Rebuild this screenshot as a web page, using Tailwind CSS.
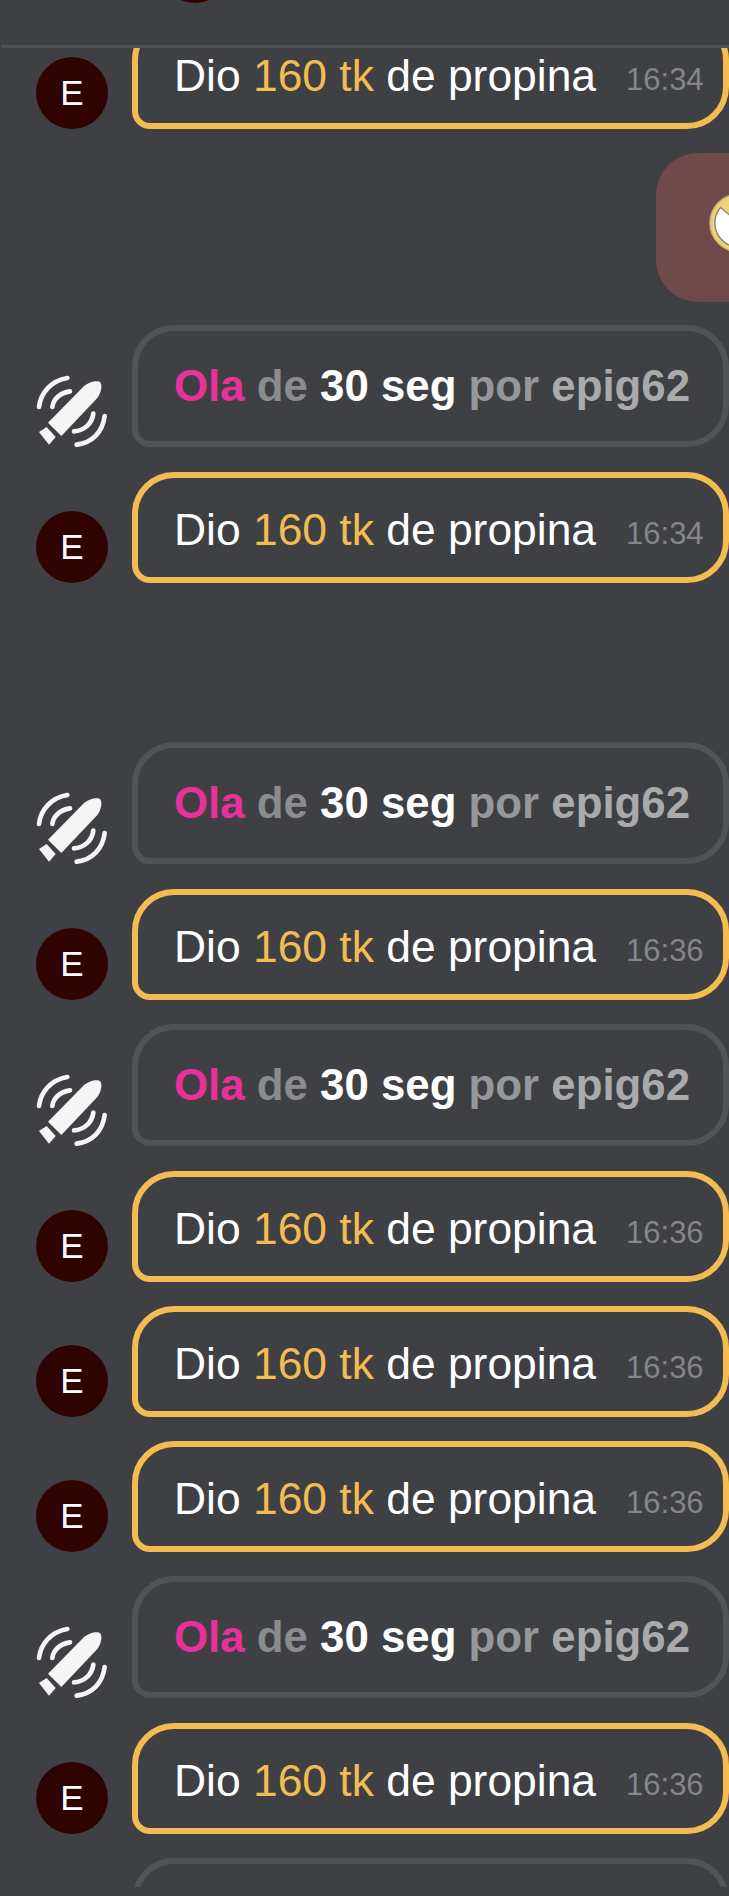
<!DOCTYPE html>
<html lang="es">
  <head>
    <meta charset="utf-8" />
    <meta name="viewport" content="width=device-width, initial-scale=1" />
    <title>Chat</title>
    <script src="https://cdn.jsdelivr.net/npm/@tailwindcss/browser@4"></script>
  </head>
  <body class="bg-[#3e4044] text-white font-['Liberation_Sans',Arial,sans-serif] overflow-hidden">
    <svg class="hidden">
      <symbol id="toy" viewBox="6 9 216 216">
        <g fill="none" stroke="#f5f5f5" stroke-width="14" stroke-linecap="round">
          <path d="M15 105 C20 62 52 26 100 18" />
          <path d="M55 105 C58 82 78 62 108 58" />
          <path d="M120 178 C150 176 174 156 178 125" />
          <path d="M128 218 C175 212 206 180 212 132" />
        </g>
        <path d="M42 152 L148 44 C162 30 190 24 198 30 C206 38 202 62 190 78 L82 192 Z" fill="#f5f5f5" />
        <path d="M15 180 L38 165 L65 195 L45 218 Z" fill="#f5f5f5" />
      </symbol>
    </svg>

    <div class="w-[729px] h-[1896px] overflow-hidden">
      <div class="h-[45px] overflow-hidden">
        <div class="w-[72px] h-[72px] rounded-full bg-[#2f0400] ml-[159px] -mt-[69px]"></div>
      </div>
      <div class="h-[3px] ml-px bg-[#505155]"></div>

      <main class="h-[1839px] overflow-hidden">
        <div class="-mt-[30px] flex flex-col">

          <div class="flex items-end pl-9 h-[111px]">
            <div class="w-[72px] h-[72px] shrink-0 rounded-full bg-[#2f0400] flex items-center justify-center text-[35px]">E</div>
            <div class="ml-6 w-[597px] h-[111px] shrink-0 border-[6px] border-[#f2bc52] rounded-tl-[42px] rounded-bl-[18px] rounded-r-[42px] pl-[36px] pt-[19px] flex items-start">
              <p class="text-[44.4px] leading-[66px] whitespace-nowrap">Dio <span class="text-[#f2bc52]">160 tk</span> de propina</p>
              <span class="ml-[30px] mt-[12px] text-[31px] leading-[50px] text-[#85868a]">16:34</span>
            </div>
          </div>

          <div class="flex justify-end mt-6 h-[149px]">
            <div class="w-[73px] h-[149px] rounded-l-[42px] bg-[#6f4a4a] overflow-hidden pl-[53px] pt-[40px]">
              <svg class="block" width="60" height="60" viewBox="0 0 60 60">
                <circle cx="30" cy="30" r="29" fill="#f0d27a" stroke="#c9b368" stroke-width="1.5" />
                <path d="M11.5 14.5 L30 30 L30 54 A24 24 0 0 1 11.5 14.5 Z" fill="#ffffff" stroke="#8b8a72" stroke-width="1.5" />
              </svg>
            </div>
          </div>

          <div class="flex items-end pl-9 mt-[23px] h-[122px]">
            <svg class="w-[72px] h-[72px] shrink-0"><use href="#toy" /></svg>
            <div class="ml-6 w-[597px] h-[122px] shrink-0 border-[6px] border-[#525358] rounded-tl-[42px] rounded-bl-[18px] rounded-r-[42px] pl-[36px] pt-[22px]">
              <p class="text-[43.8px] leading-[66px] font-bold whitespace-nowrap"><span class="text-[#e8319a]">Ola</span> <span class="text-[#8b8c8e]">de</span> 30 seg <span class="text-[#96979a]">por</span> <span class="text-[#a9aaac]">epig62</span></p>
            </div>
          </div>

          <div class="flex items-end pl-9 mt-[25px] h-[111px]">
            <div class="w-[72px] h-[72px] shrink-0 rounded-full bg-[#2f0400] flex items-center justify-center text-[35px]">E</div>
            <div class="ml-6 w-[597px] h-[111px] shrink-0 border-[6px] border-[#f2bc52] rounded-tl-[42px] rounded-bl-[18px] rounded-r-[42px] pl-[36px] pt-[19px] flex items-start">
              <p class="text-[44.4px] leading-[66px] whitespace-nowrap">Dio <span class="text-[#f2bc52]">160 tk</span> de propina</p>
              <span class="ml-[30px] mt-[12px] text-[31px] leading-[50px] text-[#85868a]">16:34</span>
            </div>
          </div>

          <div class="flex items-end pl-9 mt-[159px] h-[122px]">
            <svg class="w-[72px] h-[72px] shrink-0"><use href="#toy" /></svg>
            <div class="ml-6 w-[597px] h-[122px] shrink-0 border-[6px] border-[#525358] rounded-tl-[42px] rounded-bl-[18px] rounded-r-[42px] pl-[36px] pt-[22px]">
              <p class="text-[43.8px] leading-[66px] font-bold whitespace-nowrap"><span class="text-[#e8319a]">Ola</span> <span class="text-[#8b8c8e]">de</span> 30 seg <span class="text-[#96979a]">por</span> <span class="text-[#a9aaac]">epig62</span></p>
            </div>
          </div>

          <div class="flex items-end pl-9 mt-[25px] h-[111px]">
            <div class="w-[72px] h-[72px] shrink-0 rounded-full bg-[#2f0400] flex items-center justify-center text-[35px]">E</div>
            <div class="ml-6 w-[597px] h-[111px] shrink-0 border-[6px] border-[#f2bc52] rounded-tl-[42px] rounded-bl-[18px] rounded-r-[42px] pl-[36px] pt-[19px] flex items-start">
              <p class="text-[44.4px] leading-[66px] whitespace-nowrap">Dio <span class="text-[#f2bc52]">160 tk</span> de propina</p>
              <span class="ml-[30px] mt-[12px] text-[31px] leading-[50px] text-[#85868a]">16:36</span>
            </div>
          </div>

          <div class="flex items-end pl-9 mt-6 h-[122px]">
            <svg class="w-[72px] h-[72px] shrink-0"><use href="#toy" /></svg>
            <div class="ml-6 w-[597px] h-[122px] shrink-0 border-[6px] border-[#525358] rounded-tl-[42px] rounded-bl-[18px] rounded-r-[42px] pl-[36px] pt-[22px]">
              <p class="text-[43.8px] leading-[66px] font-bold whitespace-nowrap"><span class="text-[#e8319a]">Ola</span> <span class="text-[#8b8c8e]">de</span> 30 seg <span class="text-[#96979a]">por</span> <span class="text-[#a9aaac]">epig62</span></p>
            </div>
          </div>

          <div class="flex items-end pl-9 mt-[25px] h-[111px]">
            <div class="w-[72px] h-[72px] shrink-0 rounded-full bg-[#2f0400] flex items-center justify-center text-[35px]">E</div>
            <div class="ml-6 w-[597px] h-[111px] shrink-0 border-[6px] border-[#f2bc52] rounded-tl-[42px] rounded-bl-[18px] rounded-r-[42px] pl-[36px] pt-[19px] flex items-start">
              <p class="text-[44.4px] leading-[66px] whitespace-nowrap">Dio <span class="text-[#f2bc52]">160 tk</span> de propina</p>
              <span class="ml-[30px] mt-[12px] text-[31px] leading-[50px] text-[#85868a]">16:36</span>
            </div>
          </div>

          <div class="flex items-end pl-9 mt-6 h-[111px]">
            <div class="w-[72px] h-[72px] shrink-0 rounded-full bg-[#2f0400] flex items-center justify-center text-[35px]">E</div>
            <div class="ml-6 w-[597px] h-[111px] shrink-0 border-[6px] border-[#f2bc52] rounded-tl-[42px] rounded-bl-[18px] rounded-r-[42px] pl-[36px] pt-[19px] flex items-start">
              <p class="text-[44.4px] leading-[66px] whitespace-nowrap">Dio <span class="text-[#f2bc52]">160 tk</span> de propina</p>
              <span class="ml-[30px] mt-[12px] text-[31px] leading-[50px] text-[#85868a]">16:36</span>
            </div>
          </div>

          <div class="flex items-end pl-9 mt-6 h-[111px]">
            <div class="w-[72px] h-[72px] shrink-0 rounded-full bg-[#2f0400] flex items-center justify-center text-[35px]">E</div>
            <div class="ml-6 w-[597px] h-[111px] shrink-0 border-[6px] border-[#f2bc52] rounded-tl-[42px] rounded-bl-[18px] rounded-r-[42px] pl-[36px] pt-[19px] flex items-start">
              <p class="text-[44.4px] leading-[66px] whitespace-nowrap">Dio <span class="text-[#f2bc52]">160 tk</span> de propina</p>
              <span class="ml-[30px] mt-[12px] text-[31px] leading-[50px] text-[#85868a]">16:36</span>
            </div>
          </div>

          <div class="flex items-end pl-9 mt-6 h-[122px]">
            <svg class="w-[72px] h-[72px] shrink-0"><use href="#toy" /></svg>
            <div class="ml-6 w-[597px] h-[122px] shrink-0 border-[6px] border-[#525358] rounded-tl-[42px] rounded-bl-[18px] rounded-r-[42px] pl-[36px] pt-[22px]">
              <p class="text-[43.8px] leading-[66px] font-bold whitespace-nowrap"><span class="text-[#e8319a]">Ola</span> <span class="text-[#8b8c8e]">de</span> 30 seg <span class="text-[#96979a]">por</span> <span class="text-[#a9aaac]">epig62</span></p>
            </div>
          </div>

          <div class="flex items-end pl-9 mt-[25px] h-[111px]">
            <div class="w-[72px] h-[72px] shrink-0 rounded-full bg-[#2f0400] flex items-center justify-center text-[35px]">E</div>
            <div class="ml-6 w-[597px] h-[111px] shrink-0 border-[6px] border-[#f2bc52] rounded-tl-[42px] rounded-bl-[18px] rounded-r-[42px] pl-[36px] pt-[19px] flex items-start">
              <p class="text-[44.4px] leading-[66px] whitespace-nowrap">Dio <span class="text-[#f2bc52]">160 tk</span> de propina</p>
              <span class="ml-[30px] mt-[12px] text-[31px] leading-[50px] text-[#85868a]">16:36</span>
            </div>
          </div>

          <!-- next notice, cut off by the bottom of the list -->
          <div class="flex items-end pl-9 mt-6 h-[122px]">
            <div class="w-[72px] h-[72px] shrink-0"></div>
            <div class="ml-6 w-[597px] h-[122px] shrink-0 border-[6px] border-[#525358] rounded-tl-[42px] rounded-bl-[18px] rounded-r-[42px]"></div>
          </div>
        </div>
      </main>
    </div>
  </body>
</html>
